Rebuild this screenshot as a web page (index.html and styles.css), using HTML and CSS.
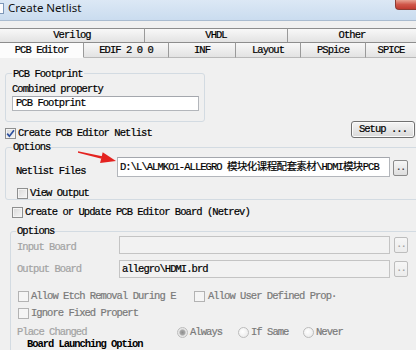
FILE: index.html
```html
<!DOCTYPE html>
<html>
<head>
<meta charset="utf-8">
<link rel="stylesheet" href="styles.css">
</head>
<body>
<div class="titlebar">
  <span class="appicon"></span>
  <span class="title">Create Netlist</span>
  <span class="close"></span>
</div>
<div class="tabs">
  <div class="tabrow">
    <div class="tab w-verilog">Verilog</div>
    <div class="tab w-vhdl">VHDL</div>
    <div class="tab w-other">Other</div>
  </div>
  <div class="tabrow">
    <div class="tab tab2 selected w-pcb">PCB Editor</div>
    <div class="tab tab2 w-edif">EDIF 2 0 0</div>
    <div class="tab tab2 w-inf">INF</div>
    <div class="tab tab2 w-layout">Layout</div>
    <div class="tab tab2 w-pspice">PSpice</div>
    <div class="tab tab2 w-spice">SPICE</div>
  </div>
</div>
<div class="panel">
  <svg class="arrow" width="50" height="24" viewBox="0 0 50 24">
    <path d="M8 5.2 L32.2 10.2 L31.6 12.8 L8 6.8 Z" fill="#e42320"/>
    <path d="M46 15 L30.1 16.9 L32.7 6.2 Z" fill="#e42320"/>
  </svg>

  <div class="group g1">
    <div class="legend">PCB Footprint</div>
    <div class="caption">Combined property</div>
    <div class="input fp">PCB Footprint</div>
  </div>

  <div class="netrow">
    <div class="check c-net">
      <span class="cb"><svg width="9" height="9" viewBox="0 0 9 9"><path d="M1.2 4.6 L3.4 7.2 L8 1.2" fill="none" stroke="#2c4f9e" stroke-width="1.7"/></svg></span>
      <span class="ctext">Create PCB Editor Netlist</span>
    </div>
    <div class="btn setup">Setup ...</div>
  </div>

  <div class="group g2">
    <div class="legend">Options</div>
    <div class="field f-net">
      <span class="flabel l-net">Netlist Files</span>
      <div class="input path">D:\L\ALMKO1-ALLEGRO <span class="cjk">模块化课程配套素材</span>\HDMI<span class="cjk">模块</span>PCB</div>
      <div class="browse b-net">..</div>
    </div>
    <div class="check c-vo">
      <span class="cb"></span>
      <span class="ctext">View Output</span>
    </div>
  </div>

  <div class="check c-cu">
    <span class="cb"></span>
    <span class="ctext">Create or Update PCB Editor Board (Netrev)</span>
  </div>

  <div class="group g3">
    <div class="legend">Options</div>
    <div class="field f-in">
      <span class="flabel dis l-in">Input Board</span>
      <div class="input disabled in-board"></div>
      <div class="browse dis-b b-in">..</div>
    </div>
    <div class="field f-out">
      <span class="flabel dis l-out">Output Board</span>
      <div class="input disabled out-board">allegro\HDMI.brd</div>
      <div class="browse dis-b b-in">..</div>
    </div>
    <div class="cbrow r1">
      <span class="cb dcb first"></span>
      <span class="ctext dtext t-etch">Allow Etch Removal During E</span>
      <span class="cb dcb second"></span>
      <span class="ctext dtext t-user">Allow User Defined Prop·</span>
    </div>
    <div class="cbrow r2">
      <span class="cb dcb first"></span>
      <span class="ctext dtext t-fixed">Ignore Fixed Propert</span>
    </div>
    <div class="placerow">
      <span class="flabel dis l-place">Place Changed</span>
      <span class="radio-item ri-always"><span class="radio on"></span><span class="dtext">Always</span></span>
      <span class="radio-item ri-same"><span class="radio"></span><span class="dtext">If Same</span></span>
      <span class="radio-item"><span class="radio"></span><span class="dtext">Never</span></span>
    </div>
    <div class="group g4">
      <div class="legend l-blo">Board Launching Option</div>
    </div>
  </div>
</div>
</body>
</html>
```

FILE: styles.css
```css
* { box-sizing: border-box; }

body {
  margin: 0;
  width: 416px;
  height: 350px;
  overflow: hidden;
  background: #f0f0f0;
  font-family: "Liberation Mono", "Noto Sans CJK SC", monospace;
  font-size: 10.5px;
  letter-spacing: -0.95px;
  color: #000;
  -webkit-text-stroke: 0.2px currentColor;
}

/* title bar */
.titlebar {
  height: 21px;
  display: flex;
  align-items: flex-start;
  background: linear-gradient(#dce8f5, #cadcef);
  border-bottom: 1px solid #a9bbcf;
}
.appicon {
  width: 4px;
  height: 11px;
  margin-top: 3px;
  background: #fbfcfe;
  border: 1px solid #7d97b8;
  border-left: none;
}
.title {
  font-family: "Noto Sans", sans-serif;
  font-size: 11.5px;
  letter-spacing: 0;
  -webkit-text-stroke: 0;
  line-height: 15px;
  margin-left: 4px;
  color: #111;
}
.close {
  margin-left: auto;
  width: 21px;
  height: 10px;
  background: linear-gradient(#e7a393, #d0574a 50%, #bf3b30);
  border-radius: 0 0 0 4px;
  border-left: 1px solid #8d3c33;
  border-bottom: 1px solid #8d3c33;
}

/* tabs */
.tabs { margin-top: 7px; }
.tabrow { display: flex; }
.tab {
  height: 14px;
  border-top: 1px solid #8d8d8d;
  border-right: 1px solid #9a9a9a;
  background: linear-gradient(#f8f8f8, #e3e3e3);
  text-align: center;
  line-height: 13px;
  white-space: nowrap;
}
.tab2 {
  height: 16px;
  line-height: 14px;
  border-bottom: 1px solid #b9b9b9;
}
.tab.selected {
  background: #fcfcfc;
  border-bottom-color: transparent;
}
.w-verilog { width: 145px; }
.w-vhdl { width: 143px; }
.w-other { width: 128px; border-right: none; }
.w-pcb { width: 84px; }
.w-edif { width: 85px; }
.w-inf { width: 67px; }
.w-layout { width: 65px; }
.w-pspice { width: 65px; }
.w-spice { width: 50px; border-right: none; }

/* panel */
.panel {
  position: relative;
  height: 292px;
  overflow: hidden;
}
.arrow {
  position: absolute;
  left: 70px;
  top: 88px;
}

.group {
  border: 1px solid #d3dbe2;
  border-radius: 3px;
}
.legend {
  width: fit-content;
  background: #f0f0f0;
  padding: 0 1px;
  line-height: 12px;
  white-space: nowrap;
}

.g1 {
  margin: 15px 0 0 5px;
  width: 200px;
  height: 49px;
}
.g1 .legend { margin: -6px 0 0 6px; }
.caption {
  margin: 3px 0 0 6px;
  line-height: 12px;
}
.input {
  background: #fff;
  border: 1px solid #b3b6bb;
  border-top-color: #a4a7ad;
  white-space: nowrap;
  overflow: hidden;
}
.fp {
  margin: 1px 0 0 6px;
  width: 187px;
  height: 15px;
  line-height: 13px;
  padding-left: 3px;
}

.netrow {
  display: flex;
  justify-content: space-between;
  align-items: flex-start;
  margin-top: -1px;
  height: 17px;
  padding: 0 1px 0 5px;
}
.check {
  display: flex;
  align-items: center;
}
.c-net { margin-top: 6px; }
.cb {
  flex: none;
  width: 11px;
  height: 11px;
  border: 1px solid #8e8f8f;
  background: linear-gradient(135deg, #d9d9d9, #f6f6f6);
  box-shadow: inset 0 0 0 1px #f4f4f4;
  display: flex;
  align-items: center;
  justify-content: center;
}
.ctext {
  margin-left: 2px;
  line-height: 12px;
  white-space: nowrap;
}
.btn {
  border: 1px solid #707070;
  border-radius: 3px;
  background: linear-gradient(#f4f4f4, #e7e7e7 50%, #d9d9d9);
  box-shadow: inset 0 0 0 1px #fbfbfb;
  text-align: center;
}
.setup {
  width: 64px;
  height: 17px;
  line-height: 15px;
}

.g2 {
  margin: 9px 0 0 5px;
  width: 416px;
  height: 53px;
}
.g2 .legend { margin: -7px 0 0 6px; }
.field {
  display: flex;
  align-items: flex-start;
}
.f-net { margin-top: 4px; }
.flabel {
  flex: none;
  line-height: 12px;
  white-space: nowrap;
}
.l-net { width: 101px; margin: 8px 0 0 10px; }
.path {
  width: 273px;
  height: 20px;
  line-height: 18px;
  padding-left: 2px;
}
.cjk { letter-spacing: -0.6px; }
.browse {
  flex: none;
  border: 1px solid #8a8a8a;
  border-radius: 2px;
  background: linear-gradient(#f6f6f6, #dedede);
  font-size: 9px;
  line-height: 15px;
  text-align: center;
  letter-spacing: -1px;
  color: #333;
}
.b-net { width: 15px; height: 16px; margin: 3px 0 0 3px; }
.c-vo { margin: 10px 0 0 11px; }

.c-cu { margin: 6px 0 0 12px; }

.g3 {
  margin: 13px 0 0 10px;
  width: 420px;
  height: 140px;
}
.g3 > .legend { margin: -7px 0 0 5px; }
.f-in { margin-top: -1px; }
.f-out { margin-top: 6px; }
.dis { color: #a3a3a3; }
.l-in { width: 102px; margin: 5px 0 0 6px; }
.l-out { width: 102px; margin: 3px 0 0 6px; }
.input.disabled {
  background: #f2f2f2;
  border-color: #c4c4c4;
  width: 271px;
  height: 18px;
  line-height: 16px;
  padding-left: 2px;
}
.out-board { background: #f7f7f7; }
.dis-b {
  border-color: #bdbdbd;
  background: linear-gradient(#f6f6f6, #ececec);
  color: #9a9a9a;
}
.b-in { width: 14px; height: 16px; margin: 1px 0 0 4px; }

.cbrow {
  display: flex;
  align-items: center;
}
.r1 { margin-top: 12px; }
.r2 { margin-top: 5px; }
.dcb {
  border-color: #b3b3b3;
  background: #f5f5f5;
  box-shadow: none;
}
.first { margin-left: 7px; }
.dtext { color: #7a7a7a; }
.t-etch { width: 147px; }
.second { margin-left: 16px; }
.t-user { margin-left: 3px; }

.placerow {
  display: flex;
  align-items: center;
  margin-top: 7px;
  height: 12px;
}
.l-place { width: 160px; margin-left: 6px; }
.radio-item {
  display: flex;
  align-items: center;
  white-space: nowrap;
}
.ri-always { width: 61px; }
.ri-same { width: 65px; }
.radio {
  flex: none;
  width: 11px;
  height: 11px;
  border: 1px solid #bcbcbc;
  border-radius: 50%;
  background: radial-gradient(circle at 40% 40%, #ffffff, #e6e6e6);
  margin-right: 2px;
}
.radio.on {
  background: radial-gradient(circle, #8e8e8e 0, #a9a9a9 2.5px, #e4e4e4 3.5px, #f4f4f4 100%);
}

.g4 {
  margin: 12px 0 0 9px;
  width: 382px;
  height: 30px;
}
.l-blo {
  margin: -13px 0 0 5px;
  line-height: 12px;
  font-weight: bold;
  -webkit-text-stroke: 0;
  letter-spacing: -1.05px;
}
```
